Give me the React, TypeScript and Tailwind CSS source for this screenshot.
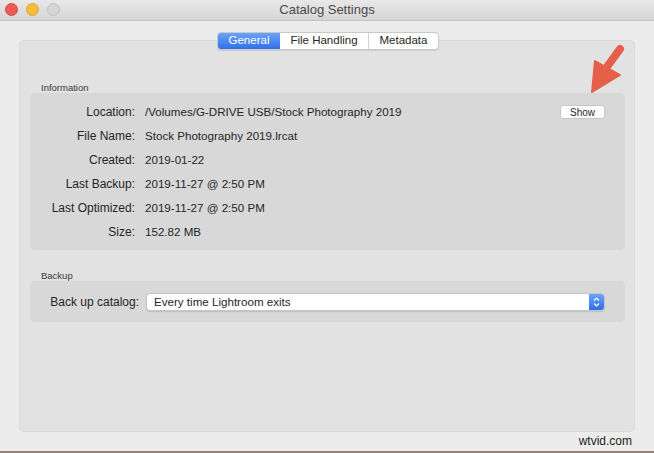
import React from "react";

const rows: [string, string][] = [
  ["Location:", "/Volumes/G-DRIVE USB/Stock Photography 2019"],
  ["File Name:", "Stock Photography 2019.lrcat"],
  ["Created:", "2019-01-22"],
  ["Last Backup:", "2019-11-27 @ 2:50 PM"],
  ["Last Optimized:", "2019-11-27 @ 2:50 PM"],
  ["Size:", "152.82 MB"],
];

function Arrow() {
  return (
    <svg className="absolute left-[584px] top-[44px]" width="42" height="52" viewBox="0 0 42 52">
      <path d="M36 5 L20 27" stroke="#e5604b" strokeWidth="8" strokeLinecap="round" />
      <path d="M8 48 L11 17 L36 31 Z" fill="#e5604b" stroke="#e5604b" strokeWidth="2" strokeLinejoin="round" />
    </svg>
  );
}

export default function App() {
  return (
    <div
      className="relative w-[654px] h-[453px] overflow-hidden bg-[#ececec] text-[#262626]"
      style={{ fontFamily: '"Liberation Sans", Arial, sans-serif' }}
    >
      {/* title bar */}
      <div className="relative h-[21px] bg-gradient-to-b from-[#e8e8e8] to-[#d6d6d6] border-b border-[#c4c4c4] flex items-center justify-center">
        <div className="absolute left-[5px] top-[3px] flex gap-[8px]">
          <span className="w-[13px] h-[13px] rounded-full bg-[#ec5d57] border border-[#d8483f]" />
          <span className="w-[13px] h-[13px] rounded-full bg-[#f6bd3b] border border-[#dea132]" />
          <span className="w-[13px] h-[13px] rounded-full bg-[#d5d5d5] border border-[#c2c2c2]" />
        </div>
        <span className="text-[13px] text-[#4a4a4a]">Catalog Settings</span>
      </div>

      <div className="px-[19px] pt-[19px]">
        <div className="relative h-[392px] rounded-[5px] bg-[#e2e2e2] border border-[#dadada] pl-[10px] pr-[9px]">
          {/* tabs */}
          <div className="absolute left-[197px] top-[-9px] flex h-[18px] rounded-[4px] bg-white border border-[#c9c9c9] shadow-[0_1px_1px_rgba(0,0,0,0.1)] text-[11.5px] overflow-hidden">
            <div className="w-[62px] flex items-center justify-center bg-gradient-to-b from-[#6ba3f8] to-[#2f6fe8] text-white">General</div>
            <div className="w-[89px] flex items-center justify-center border-r border-[#d4d4d4]">File Handling</div>
            <div className="w-[69px] flex items-center justify-center">Metadata</div>
          </div>

          <div className="pt-[41px] pl-[11px] text-[9.5px] leading-[11px] text-[#3a3a3a]">Information</div>
          <div className="rounded-[5px] bg-[#d8d8d8] pt-[7px] pb-[6px] text-[12px]">
            {rows.map(([k, v], i) => (
              <div key={k} className="flex items-center h-[24px]">
                <div className="w-[105px] text-right whitespace-nowrap">{k}</div>
                <div className="ml-[10px] flex-1 text-[11.6px] whitespace-nowrap">{v}</div>
                {i === 0 && (
                  <div className="mr-[20px] w-[45px] h-[14px] flex items-center justify-center rounded-[3px] bg-white border border-[#c6c6c6] text-[10px]">
                    Show
                  </div>
                )}
              </div>
            ))}
          </div>

          <div className="pt-[20px] pl-[11px] text-[9.5px] text-[#3a3a3a] leading-[11px]">Backup</div>
          <div className="rounded-[5px] bg-[#d8d8d8] h-[41px] flex items-center text-[12px]">
            <div className="w-[109px] text-right shrink-0 whitespace-nowrap">Back up catalog:</div>
            <div className="ml-[7px] flex-1 mr-[20px] h-[18px] flex items-center bg-white rounded-[4px] border border-[#c6c6c6] shadow-[0_1px_1px_rgba(0,0,0,0.12)] overflow-hidden">
              <span className="flex-1 pl-[7px] text-[11.6px]">Every time Lightroom exits</span>
              <div className="w-[15px] h-full bg-gradient-to-b from-[#6ba3f8] to-[#2f6fe8] flex items-center justify-center">
                <svg width="7" height="12" viewBox="0 0 7 12">
                  <path d="M1 4.5 L3.5 2 L6 4.5 M1 7.5 L3.5 10 L6 7.5" stroke="white" strokeWidth="1.2" fill="none" />
                </svg>
              </div>
            </div>
          </div>
        </div>
      </div>

      <Arrow />
      <div className="absolute right-[22px] bottom-[3px] text-[12px] text-[#222]">wtvid.com</div>
      <div className="absolute left-0 right-0 bottom-0 h-[2px] bg-[#9a7f74]" />
    </div>
  );
}
